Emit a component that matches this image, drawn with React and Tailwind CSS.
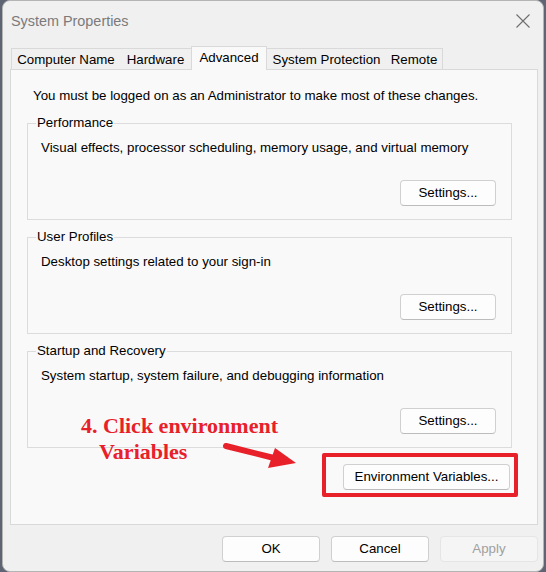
export default function App() {
  const tabs = [
    { label: 'Computer Name', w: 'w-[109px]' },
    { label: 'Hardware', w: 'w-[71px]' },
    { label: 'Advanced', w: 'w-[76px]', active: true },
    { label: 'System Protection', w: 'w-[119px]' },
    { label: 'Remote', w: 'w-[57px]', last: true },
  ]

  return (
    <div className="relative w-[546px] h-[572px] bg-[#5e6472] font-['Liberation_Sans',Arial,sans-serif] text-[13.3px] text-black leading-[16px]">
      <div className="ml-[2px] w-[542px] h-[572px] bg-[#f0f0f0] rounded-[8px] border border-[#b4b4b4] flex flex-col">
        {/* title bar */}
        <div className="h-[45px] flex items-start justify-between pl-[8px] pr-[12px] pt-[11px]">
          <span className="text-[14.4px] leading-[18px] text-[#7a7a7a]">System Properties</span>
          <svg width="16" height="16" viewBox="0 0 16 16" className="mt-[1px]">
            <path d="M1.5 1.5 L14.5 14.5 M14.5 1.5 L1.5 14.5" stroke="#6e6e6e" strokeWidth="1.1" fill="none" />
          </svg>
        </div>

        {/* tabs */}
        <div className="flex items-end h-[23px] ml-[8px]">
          {tabs.map((tab) =>
            tab.active ? (
              <div
                key={tab.label}
                className={`${tab.w} relative z-10 -mb-px h-[24px] bg-[#f9f9f9] border-l border-t border-r border-[#d9d9d9] flex items-start justify-center pt-[3px]`}
              >
                {tab.label}
              </div>
            ) : (
              <div
                key={tab.label}
                className={`${tab.w} h-[21px] bg-[#f0f0f0] border-t border-[#d9d9d9] ${
                  tab.last ? 'border-r' : ''
                } ${tab.label === 'Computer Name' ? 'border-l' : ''} flex items-start justify-center pt-[3px]`}
              >
                {tab.label}
              </div>
            )
          )}
        </div>

        {/* tab panel */}
        <div className="relative ml-[7px] w-[528px] h-[456px] bg-[#f9f9f9] border border-[#d9d9d9] pl-[16px] pt-[18px]">
          <p className="pl-[6px]">You must be logged on as an Administrator to make most of these changes.</p>

          <GroupBox title="Performance" text="Visual effects, processor scheduling, memory usage, and virtual memory" className="mt-[19px]" />
          <GroupBox title="User Profiles" text="Desktop settings related to your sign-in" className="mt-[17px]" />
          <GroupBox title="Startup and Recovery" text="System startup, system failure, and debugging information" className="mt-[17px]" />

          <div className="w-[483px] flex justify-end mt-[16px]">
            <button className="w-[167px] h-[26px] bg-[#fdfdfd] border border-[#d0d0d0] border-b-[#bcbcbc] rounded-[4px]">
              Environment Variables...
            </button>
          </div>

          {/* annotation box */}
          <div className="absolute left-[311px] top-[383px] w-[196px] h-[44px] border-[4px] border-[#e8202a] rounded-[2px]" />
        </div>

        {/* bottom buttons */}
        <div className="flex justify-end gap-[11px] pr-[5px] mt-[11px]">
          <button className="w-[98px] h-[26px] bg-[#fdfdfd] border border-[#d0d0d0] border-b-[#bcbcbc] rounded-[4px]">OK</button>
          <button className="w-[98px] h-[26px] bg-[#fdfdfd] border border-[#d0d0d0] border-b-[#bcbcbc] rounded-[4px]">Cancel</button>
          <button className="w-[98px] h-[26px] bg-[#f5f5f5] border border-[#e5e5e5] rounded-[4px] text-[#a0a0a0]">Apply</button>
        </div>
      </div>

      {/* annotation */}
      <div className="absolute left-[81px] top-[413px] font-['Liberation_Serif','Times_New_Roman',serif] font-bold text-[22px] leading-[26px] text-[#e8202a]">
        <div>4. Click environment</div>
        <div className="pl-[18px]">Variables</div>
      </div>
      <svg className="absolute left-[220px] top-[438px]" width="80" height="34" viewBox="0 0 80 34">
        <path d="M6 8 L58 21" stroke="#e8202a" strokeWidth="6" strokeLinecap="round" fill="none" />
        <polygon points="76,25 55,10 48,30" fill="#e8202a" />
      </svg>
    </div>
  )
}

function GroupBox({ title, text, className }) {
  return (
    <div className={`relative w-[485px] h-[97px] border border-[#dcdcdc] pl-[13px] pt-[16px] ${className}`}>
      <span className="absolute left-[8px] -top-[9px] bg-[#f9f9f9] px-[1px]">{title}</span>
      <p>{text}</p>
      <div className="flex justify-end pr-[15px] mt-[24px]">
        <button className="w-[96px] h-[26px] bg-[#fdfdfd] border border-[#d0d0d0] border-b-[#bcbcbc] rounded-[4px]">
          Settings...
        </button>
      </div>
    </div>
  )
}
